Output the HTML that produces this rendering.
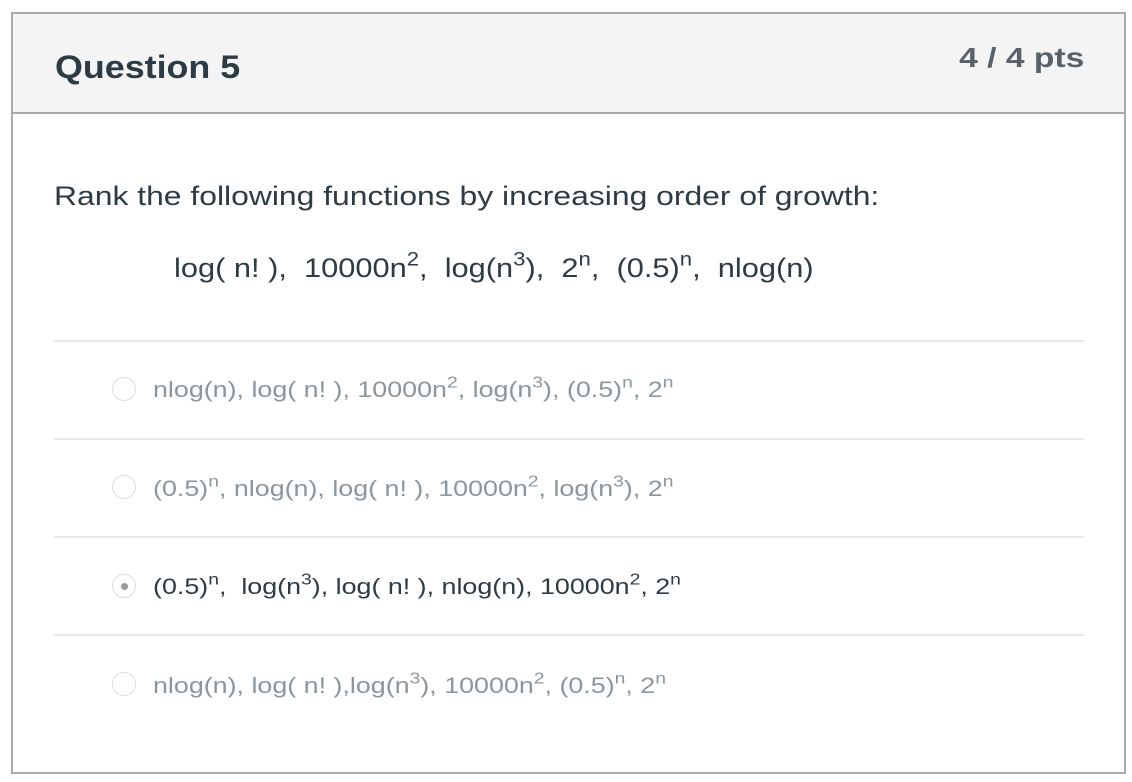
<!DOCTYPE html>
<html><head><style>
body{margin:0;background:#fff;font-family:"Liberation Sans",sans-serif;width:1132px;height:782px;position:relative;overflow:hidden}
.box{position:absolute;left:11px;top:12px;width:1111px;height:758px;border:2px solid #aaa}
.hdr{position:absolute;left:0;top:0;width:1111px;height:98px;background:#f4f4f4;border-bottom:2px solid #aaa}
.t{position:absolute;white-space:nowrap;color:#2d3b45;transform-origin:left center}
sup{font-size:72%;line-height:0;vertical-align:0.6em}
.line{position:absolute;left:41px;width:1030px;height:2px;background:#e8e8e8}
.r{position:absolute;left:99px;width:24px;height:24px;border-radius:50%;border:1px solid #ddd;background:#fff;box-sizing:border-box}
.opt{position:absolute;left:140px;font-size:22px;white-space:nowrap;color:#8b969e;transform:scaleX(1.22);transform-origin:left center}
</style></head><body>
<div class="box">
<div class="hdr"></div>
<div class="t" style="left:42px;top:35px;font-size:32px;font-weight:bold;transform:scaleX(1.12)">Question 5</div>
<div class="t" style="right:40px;top:28px;font-size:28px;font-weight:bold;color:#59626a;transform:scaleX(1.2);transform-origin:right center">4 / 4 pts</div>
<div class="t" style="left:41px;top:167px;font-size:27px;transform:scaleX(1.18)">Rank the following functions by increasing order of growth:</div>
<div class="t" style="left:161px;top:239px;font-size:27px;transform:scaleX(1.14)">log( n! ), &nbsp;10000n<sup>2</sup>, &nbsp;log(n<sup>3</sup>), &nbsp;2<sup>n</sup>, &nbsp;(0.5)<sup>n</sup>, &nbsp;nlog(n)</div>
<div class="line" style="top:326px"></div>
<div class="line" style="top:424px"></div>
<div class="line" style="top:522px"></div>
<div class="line" style="top:620px"></div>
<div class="r" style="top:363px"></div>
<div class="opt" style="top:363px">nlog(n), log( n! ), 10000n<sup>2</sup>, log(n<sup>3</sup>), (0.5)<sup>n</sup>, 2<sup>n</sup></div>
<div class="r" style="top:461px"></div>
<div class="opt" style="top:462px">(0.5)<sup>n</sup>, nlog(n), log( n! ), 10000n<sup>2</sup>, log(n<sup>3</sup>), 2<sup>n</sup></div>
<div class="r" style="top:560px"><div style="position:absolute;left:8px;top:8px;width:7px;height:7px;border-radius:50%;background:#999"></div></div>
<div class="opt" style="top:560px;color:#2d3b45">(0.5)<sup>n</sup>, &nbsp;log(n<sup>3</sup>), log( n! ), nlog(n), 10000n<sup>2</sup>, 2<sup>n</sup></div>
<div class="r" style="top:658px"></div>
<div class="opt" style="top:659px">nlog(n), log( n! ),log(n<sup>3</sup>), 10000n<sup>2</sup>, (0.5)<sup>n</sup>, 2<sup>n</sup></div>
</div>
</body></html>
